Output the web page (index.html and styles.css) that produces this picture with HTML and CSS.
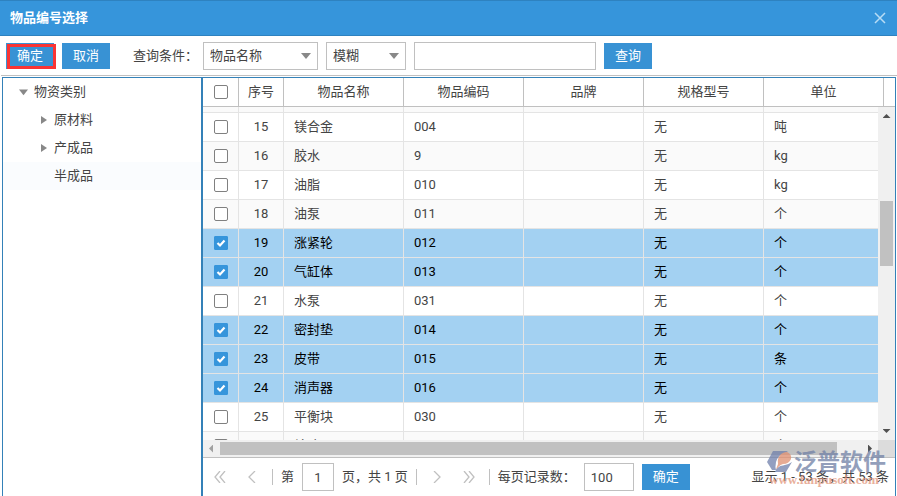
FILE: index.html
```html
<!DOCTYPE html>
<html lang="zh-CN">
<head>
  <meta charset="UTF-8" />
  <meta name="viewport" content="width=device-width, initial-scale=1" />
  <title>物品编号选择</title>
  <link rel="stylesheet" href="styles.css">
</head>
<body>
  <header class="titlebar">
    <h1>物品编号选择</h1>
    <button class="close" aria-label="关闭">
      <svg width="12" height="12" viewBox="0 0 12 12"><path d="M1 1L11 11M11 1L1 11" stroke="#b8dcf5" stroke-width="1.5" fill="none"/></svg>
    </button>
  </header>

  <form class="toolbar" onsubmit="return false">
    <button class="btn marked">确定</button>
    <button class="btn">取消</button>
    <label class="cond" for="field">查询条件：</label>
    <select id="field" class="box field"><option>物品名称</option></select>
    <select class="box match" aria-label="匹配方式"><option>模糊</option></select>
    <input type="text" class="box keyword" aria-label="关键字">
    <button class="btn">查询</button>
  </form>

  <main class="panel">
    <nav class="tree">
      <ul>
        <li class="root"><i class="arrow down"></i>物资类别</li>
        <li><i class="arrow right"></i>原材料</li>
        <li><i class="arrow right"></i>产成品</li>
        <li class="hover"><i class="arrow"></i>半成品</li>
      </ul>
    </nav>

    <section class="grid">
      <div class="grid-head">
        <table>
          <colgroup><col class="c-check"><col class="c-no"><col><col><col><col><col></colgroup>
          <thead>
            <tr>
              <th><input type="checkbox" aria-label="全选"></th>
              <th>序号</th><th>物品名称</th><th>物品编码</th><th>品牌</th><th>规格型号</th><th>单位</th>
            </tr>
          </thead>
        </table>
      </div>
      <div class="grid-main">
        <div class="grid-body">
          <table>
            <colgroup><col class="c-check"><col class="c-no"><col><col><col><col><col></colgroup>
            <tbody id="rows"></tbody>
          </table>
        </div>
        <div class="vbar">
          <i class="tip up"></i>
          <div class="thumb"></div>
          <i class="tip dn"></i>
        </div>
      </div>
      <div class="hbar">
        <i class="tip lf"></i>
        <div class="track"><div class="thumb"></div></div>
        <i class="tip rt"></i>
        <div class="corner"></div>
      </div>
      <footer class="pager">
        <button class="nav" aria-label="首页"><svg width="12" height="12" viewBox="0 0 12 12"><path d="M6 0L1 6L6 12M11 0L6 6L11 12"/></svg></button>
        <button class="nav" aria-label="上一页"><svg width="12" height="12" viewBox="0 0 12 12"><path d="M9 0L3 6L9 12"/></svg></button>
        <i class="sep"></i>
        <label for="page">第</label>
        <input type="text" id="page" class="box page" value="1">
        <span>页，共 1 页</span>
        <i class="sep"></i>
        <button class="nav" aria-label="下一页"><svg width="12" height="12" viewBox="0 0 12 12"><path d="M3 0L9 6L3 12"/></svg></button>
        <button class="nav" aria-label="末页"><svg width="12" height="12" viewBox="0 0 12 12"><path d="M1 0L6 6L1 12M6 0L11 6L6 12"/></svg></button>
        <i class="sep"></i>
        <label for="size">每页记录数：</label>
        <input type="text" id="size" class="box size" value="100">
        <button class="btn">确定</button>
        <span class="total">显示 1 - 53 条，共 53 条</span>
      </footer>
    </section>
  </main>

  <div class="watermark">
    <svg width="26" height="24" viewBox="0 0 26 24">
      <path d="M6 1H21L18 3Q11 5 9 12Q8 17 9 20L5 20L0 12Z" fill="#7080ab"/>
      <path d="M20 2Q25 4 24 9Q22 14 16 14Q11 15 9 22Q9 18 11 14Q10 8 14 4Q17 2 20 2Z" fill="#e08f70"/>
      <path d="M25 12L19 22H8Q10 16 16 15.500Q21 15 25 12Z" fill="#7080ab"/>
    </svg>
    <b>泛普软件</b>
    <span>www.fanpusoft.com</span>
  </div>

  <script>
    const rows = [
      [14, '', '', ''],
      [15, '镁合金', '004', '吨'],
      [16, '胶水', '9', 'kg'],
      [17, '油脂', '010', 'kg'],
      [18, '油泵', '011', '个'],
      [19, '涨紧轮', '012', '个', true],
      [20, '气缸体', '013', '个', true],
      [21, '水泵', '031', '个'],
      [22, '密封垫', '014', '个', true],
      [23, '皮带', '015', '条', true],
      [24, '消声器', '016', '个', true],
      [25, '平衡块', '030', '个'],
      [26, '轮胎', '', '个']
    ];
    document.getElementById('rows').innerHTML = rows.map(([no, name, code, unit, on]) => `
      <tr class="${on ? 'selected' : ''}">
        <td><input type="checkbox" aria-label="选择 ${no}" ${on ? 'checked' : ''}></td>
        <td>${no}</td><td>${name}</td><td>${code}</td><td></td><td>无</td><td>${unit}</td>
      </tr>`).join('');
  </script>
</body>
</html>
```
FILE: styles.css
```css
*, *::after { box-sizing: border-box; }
body {
  margin: 0;
  height: 100vh;
  display: flex;
  flex-direction: column;
  overflow: hidden;
  background: #fff;
  color: #444;
  font: 13px/20px Roboto, "Noto Sans CJK SC", sans-serif;
}
button, input, select { font: inherit; color: inherit; margin: 0; }
button { border: 0; padding: 0; background: none; cursor: pointer; }

.titlebar {
  flex: none;
  height: 36px;
  padding: 0 11px 0 10px;
  display: flex;
  align-items: center;
  justify-content: space-between;
  background: #3695db;
  border-top: 1px solid #2e82c0;
  border-bottom: 1px solid #2e82c0;
}
.titlebar h1 { margin: 0; font-size: 13px; color: #fff; }
.close { display: flex; }

.toolbar {
  flex: none;
  height: 40px;
  margin-left: 1px;
  padding: 0 5px;
  display: flex;
  align-items: center;
  border-bottom: 1px solid #c0c0c0;
}
.btn {
  width: 48px; height: 26px;
  background: #3892d4;
  color: #fff;
}
.toolbar .btn { margin-right: 8px; }
.marked { position: relative; }
.marked::after {
  content: "";
  position: absolute;
  top: 1px; left: 1px;
  width: 49px; height: 25px;
  border: 3px solid #f93434;
}
.box {
  height: 28px;
  padding: 0 6px;
  border: 1px solid #c0c0c0;
  border-radius: 0;
  background: #fff;
  outline: 0;
}
.toolbar .box { margin-right: 8px; }
select.box {
  appearance: none;
  background: #fff url("data:image/svg+xml,%3Csvg xmlns='http://www.w3.org/2000/svg' width='10' height='6'%3E%3Cpath d='M0 0H10L5 6Z' fill='%23888'/%3E%3C/svg%3E") no-repeat right 6px center;
}
.cond { width: 70px; margin-left: 15px; white-space: nowrap; }
.field { width: 115px; }
.match { width: 80px; }
.keyword { width: 182px; }

.panel {
  flex: 1;
  min-height: 0;
  margin: 1px 1px 0 2px;
  display: flex;
  border: 1px solid #3481b8;
  border-bottom: 0;
}
.tree {
  width: 200px;
  flex: none;
  border-right: 2px solid #3481b8;
}
.tree ul { margin: 0; padding: 0; list-style: none; }
.tree li {
  height: 28px;
  padding-left: 36px;
  display: flex;
  align-items: center;
}
.tree .root { padding-left: 16px; }
.tree .hover { background: #fafcfe; }
.arrow {
  width: 10px; height: 8px;
  margin-right: 5px;
  background: #888;
  clip-path: polygon(0 0, 0 0, 0 0);
}
.arrow.down { clip-path: polygon(0 20%, 90% 20%, 45% 90%); }
.arrow.right { clip-path: polygon(20% 0, 80% 50%, 20% 100%); }

.grid {
  flex: 1;
  min-width: 0;
  display: flex;
  flex-direction: column;
}
.grid table {
  width: 681px;
  table-layout: fixed;
  border-collapse: separate;
  border-spacing: 0;
}
.c-check { width: 36px; }
.c-no { width: 45px; }
.grid-head { flex: none; border-bottom: 1px solid #c0c0c0; }
.grid-head th {
  height: 28px;
  padding: 0;
  font-weight: normal;
  border-right: 1px solid #c0c0c0;
}
.grid-main { flex: 1; min-height: 0; display: flex; }
.grid-body { flex: 1; min-width: 0; overflow: hidden; }
/* scrolled to row 14 */
.grid-body table { margin-top: -23px; }
.grid td {
  height: 29px;
  padding: 0 10px;
  border-right: 1px solid #e4e4e4;
  border-bottom: 1px solid #e4e4e4;
}
.grid tbody tr:nth-child(odd) { background: #fafafa; }
.grid tbody tr.selected { background: #a3d1f2; color: #000; }
.grid td:nth-child(1), .grid td:nth-child(2) { padding: 0; text-align: center; }

input[type=checkbox] {
  appearance: none;
  display: block;
  width: 14px; height: 14px;
  margin: 0 auto;
  border: 1px solid #808080;
  border-radius: 2px;
  background: #fff;
}
input[type=checkbox]:checked {
  border-color: #3695db;
  border-radius: 1px;
  background: #3695db url("data:image/svg+xml,%3Csvg xmlns='http://www.w3.org/2000/svg' width='12' height='12'%3E%3Cpath d='M2.500 6L5 8.500L9.500 3.500' fill='none' stroke='%23fff' stroke-width='2.200'/%3E%3C/svg%3E") no-repeat center;
}

.vbar {
  width: 17px;
  flex: none;
  padding: 7px 2px;
  display: flex;
  flex-direction: column;
  align-items: center;
  background: #f0f0f0;
}
.vbar .thumb { width: 13px; height: 65px; margin: 83px 0 auto; }
.thumb { background: #c1c1c1; }
.hbar {
  flex: none;
  height: 17px;
  display: flex;
  align-items: center;
  background: #f0f0f0;
}
.hbar .track { flex: 1; padding-right: 30px; }
.hbar .thumb { height: 13px; }
.corner { width: 17px; height: 17px; background: #dcdcdc; }
.tip { flex: none; background: #505050; }
.up, .dn { width: 8px; height: 4px; }
.up { clip-path: polygon(0 100%, 50% 0, 100% 100%); }
.dn { clip-path: polygon(0 0, 100% 0, 50% 100%); }
.lf, .rt { width: 4px; height: 8px; }
.lf { margin: 0 7px 0 6px; background: #a0a0a0; clip-path: polygon(100% 0, 0 50%, 100% 100%); }
.rt { margin: 0 6px 0 1px; clip-path: polygon(0 0, 100% 50%, 0 100%); }

.pager {
  flex: none;
  height: 39px;
  padding: 0 6px 0 11px;
  display: flex;
  align-items: center;
  border-top: 1px solid #c0c0c0;
  white-space: nowrap;
}
.nav { width: 12px; height: 12px; margin-right: 20px; display: flex; }
.nav:has(+ .sep) { margin-right: 14px; }
.nav path { fill: none; stroke: #c0c0c0; stroke-width: 1.3; }
.sep { width: 1px; height: 16px; margin-right: 8px; background: #c0c0c0; }
.pager .box { margin: 0 8px; }
.page { width: 32px; text-align: center; }
.pager .size { width: 50px; }
.pager span + .sep { margin: 0 14px 0 8px; }
.total { margin-left: auto; }

.watermark {
  position: absolute;
  right: 10px; bottom: 4px;
  width: 120px; height: 42px;
  opacity: 0.75;
  pointer-events: none;
}
.watermark svg { position: absolute; left: 0; top: 0; }
.watermark b {
  position: absolute; left: 27px; top: 0;
  font-size: 23px; line-height: 26px; font-weight: 700;
  color: #7080a5;
}
.watermark span {
  position: absolute; left: 2px; top: 22px;
  font: bold 13px/16px "Liberation Serif", serif;
  color: #e2957a;
}
```
